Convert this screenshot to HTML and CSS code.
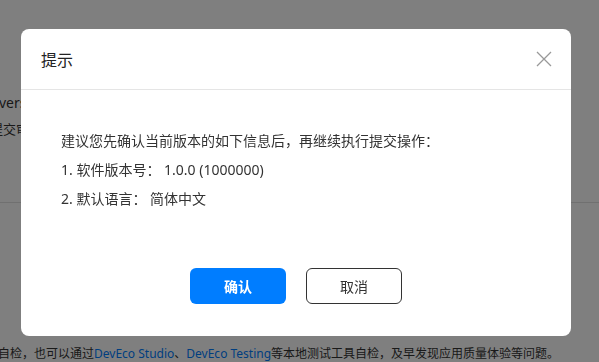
FILE: index.html
```html
<!DOCTYPE html>
<html lang="zh-CN">
<head>
    <meta charset="UTF-8">
    <meta name="viewport" content="width=device-width, initial-scale=1.0">
    <title>提示</title>
    <link rel="stylesheet" href="styles.css">
</head>
<body>
    <div class="page">
        <p class="page-line first">version</p>
        <p class="page-line second">提交审核</p>
        <div class="page-divider"></div>
        <p class="page-tip">自检，也可以通过<a href="#">DevEco Studio</a>、<a href="#">DevEco Testing</a>等本地测试工具自检，及早发现应用质量体验等问题。</p>
    </div>

    <div class="mask">
        <div class="dialog">
            <div class="dialog-header">
                <h2>提示</h2>
                <button class="close-button" aria-label="关闭">
                    <svg width="16" height="16" viewBox="0 0 16 16">
                        <path d="M1 1 L15 15 M15 1 L1 15" stroke="#999" stroke-width="1.3" fill="none"/>
                    </svg>
                </button>
            </div>
            <div class="dialog-body">
                <p>建议您先确认当前版本的如下信息后，再继续执行提交操作：</p>
                <p>1. 软件版本号： 1.0.0 (1000000)</p>
                <p>2. 默认语言： 简体中文</p>
            </div>
            <div class="dialog-footer">
                <button class="btn btn-primary">确认</button>
                <button class="btn btn-default">取消</button>
            </div>
        </div>
    </div>
</body>
</html>
```

FILE: styles.css
```css
body {
    font-family: "Noto Sans", "Noto Sans CJK SC", sans-serif;
    background-color: #ffffff;
    color: #333333;
    margin: 0;
    padding: 0;
    overflow: hidden;
}

.page {
    padding-top: 92px;
}

.page-line {
    margin: 0;
    font-size: 14px;
    line-height: 22px;
    white-space: nowrap;
}

.page-line.first {
    margin-left: -1px;
}

.page-line.second {
    margin-top: 4px;
    margin-left: -10px;
    font-size: 13px;
}

.page-divider {
    height: 1px;
    background-color: #e0e0e0;
    margin-top: 62px;
}

.page-tip {
    margin: 140px 0 0 -2px;
    font-size: 12px;
    line-height: 22px;
    white-space: nowrap;
}

.page-tip a {
    color: #007dff;
    text-decoration: none;
}

.mask {
    position: fixed;
    top: 0;
    left: 0;
    right: 0;
    bottom: 0;
    background-color: rgba(0, 0, 0, 0.5);
    padding: 29px 0 0 21px;
}

.dialog {
    width: 550px;
    height: 307px;
    background: white;
    border-radius: 8px;
    display: flex;
    flex-direction: column;
}

.dialog-header {
    height: 60px;
    display: flex;
    justify-content: space-between;
    align-items: center;
    padding: 0 19px 0 20px;
    border-bottom: 1px solid #e5e5e5;
}

.dialog-header h2 {
    margin: 0;
    font-size: 16px;
    font-weight: normal;
    color: #222222;
}

.close-button {
    background: none;
    border: none;
    padding: 0;
    width: 16px;
    height: 16px;
    cursor: pointer;
    display: flex;
}

.dialog-body {
    padding: 40px 40px 0 40px;
    flex: 1;
}

.dialog-body p {
    margin: 0 0 8px 0;
    font-size: 14px;
    line-height: 21px;
    color: #333333;
}

.dialog-footer {
    display: flex;
    justify-content: center;
    gap: 20px;
    padding-bottom: 32px;
}

.btn {
    width: 96px;
    height: 36px;
    border-radius: 6px;
    font-family: inherit;
    font-size: 14px;
    cursor: pointer;
}

.btn-primary {
    background-color: #007dff;
    border: none;
    color: white;
    font-weight: bold;
}

.btn-default {
    background-color: white;
    border: 1px solid #333333;
    color: #333333;
}
```
